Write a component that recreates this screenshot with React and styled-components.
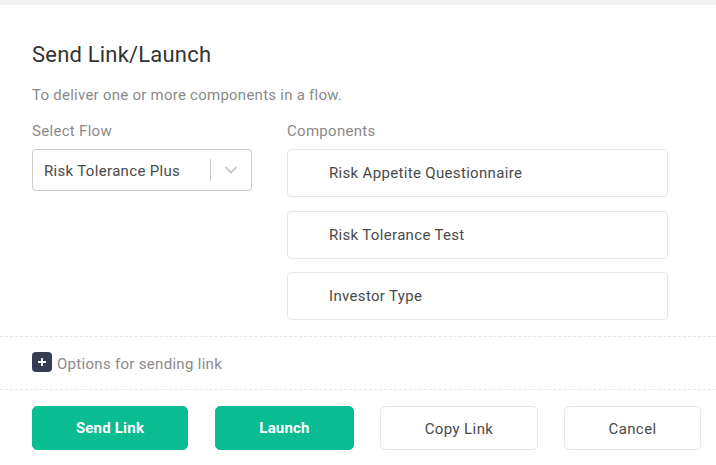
import React from "react";
import styled, { createGlobalStyle } from "styled-components";

const Global = createGlobalStyle`
  html, body { margin: 0; padding: 0; background: #fff; }
  body { font-family: Roboto, "Liberation Sans", sans-serif; }
`;

const Modal = styled.div`
  width: 716px;
  height: 465px;
  overflow: hidden;
  box-sizing: border-box;
  background: #fff;
  border-top: 5px solid #f2f2f2;
  display: flex;
  flex-direction: column;
`;

const Body = styled.div`
  padding: 33px 48px 0 32px;
  height: 331px;
  box-sizing: border-box;
`;

const Title = styled.h2`
  margin: 0;
  font-size: 22px;
  line-height: 34px;
  font-weight: 400;
  letter-spacing: 0.2px;
  color: #333;
`;

const Subtitle = styled.p`
  margin: 13px 0 0;
  font-size: 15px;
  line-height: 20px;
  letter-spacing: 0.25px;
  color: #8a8a8a;
`;

const Columns = styled.div`
  display: flex;
  gap: 35px;
  margin-top: 16px;
`;

const LeftColumn = styled.div`
  width: 220px;
`;

const RightColumn = styled.div`
  width: 381px;
`;

const FieldLabel = styled.div`
  font-size: 15px;
  line-height: 20px;
  letter-spacing: 0.3px;
  color: #8a8a8a;
  margin-bottom: 8px;
`;

const Select = styled.div`
  height: 42px;
  box-sizing: border-box;
  border: 1px solid #ccc;
  border-radius: 4px;
  display: flex;
  align-items: center;
  padding-left: 11px;
`;

const SelectValue = styled.span`
  flex: 1;
  padding-top: 2px;
  font-size: 15px;
  letter-spacing: 0.33px;
  color: #4a4a4a;
`;

const Separator = styled.span`
  width: 1px;
  height: 22px;
  background: #ccc;
`;

const Chevron = styled.svg`
  width: 14px;
  height: 10px;
  margin: 0 13px;
  fill: none;
  stroke: #ccc;
  stroke-width: 2;
`;

const ComponentList = styled.div`
  display: flex;
  flex-direction: column;
  gap: 13.5px;
`;

const ComponentRow = styled.div`
  height: 48px;
  box-sizing: border-box;
  border: 1px solid #e8e8e8;
  border-radius: 4px;
  display: flex;
  align-items: center;
  padding-left: 41px;
  font-size: 15px;
  letter-spacing: 0.33px;
  color: #4a4a4a;
`;

const OptionsRow = styled.div`
  height: 54px;
  box-sizing: border-box;
  border-top: 1px dashed #e8e8e8;
  border-bottom: 1px dashed #e8e8e8;
  display: flex;
  align-items: center;
  padding-left: 32px;
  gap: 5px;
  font-size: 15px;
  letter-spacing: 0.3px;
  color: #8a8a8a;
`;

const PlusBadge = styled.span`
  width: 20px;
  height: 20px;
  margin-bottom: 2px;
  border-radius: 4px;
  background: #343d52;
  display: flex;
  align-items: center;
  justify-content: center;
`;

const OptionsLabel = styled.span`
  padding-top: 2px;
`;

const Footer = styled.div`
  display: flex;
  padding: 16px 0 0 32px;
`;

const Button = styled.button`
  width: ${(p) => p.$w}px;
  height: 44px;
  margin-right: ${(p) => p.$gap || 0}px;
  box-sizing: border-box;
  border-radius: 5px;
  font-family: inherit;
  font-size: 15px;
  letter-spacing: ${(p) => (p.$primary ? "0.2px" : "0.4px")};
  padding: ${(p) => (p.$primary ? "0" : "2px 0 0")};
  font-weight: ${(p) => (p.$primary ? 700 : 400)};
  color: ${(p) => (p.$primary ? "#fff" : "#4a4a4a")};
  background: ${(p) => (p.$primary ? "#0bbb92" : "#fff")};
  border: 1px solid ${(p) => (p.$primary ? "#0bbb92" : "#e8e8e8")};
`;

export default function App() {
  return (
    <>
      <Global />
      <Modal>
        <Body>
          <Title>Send Link/Launch</Title>
          <Subtitle>To deliver one or more components in a flow.</Subtitle>
          <Columns>
            <LeftColumn>
              <FieldLabel>Select Flow</FieldLabel>
              <Select>
                <SelectValue>Risk Tolerance Plus</SelectValue>
                <Separator />
                <Chevron viewBox="0 0 14 10">
                  <path d="M1.5 2 L7 7.5 L12.5 2" />
                </Chevron>
              </Select>
            </LeftColumn>
            <RightColumn>
              <FieldLabel>Components</FieldLabel>
              <ComponentList>
                <ComponentRow>Risk Appetite Questionnaire</ComponentRow>
                <ComponentRow>Risk Tolerance Test</ComponentRow>
                <ComponentRow>Investor Type</ComponentRow>
              </ComponentList>
            </RightColumn>
          </Columns>
        </Body>
        <OptionsRow>
          <PlusBadge>
            <svg width="10" height="10" viewBox="0 0 10 10">
              <path d="M5 1v8M1 5h8" stroke="#fff" strokeWidth="1.8" />
            </svg>
          </PlusBadge>
          <OptionsLabel>Options for sending link</OptionsLabel>
        </OptionsRow>
        <Footer>
          <Button $primary $w={156} $gap={27}>Send Link</Button>
          <Button $primary $w={139} $gap={26}>Launch</Button>
          <Button $w={158} $gap={26}>Copy Link</Button>
          <Button $w={137}>Cancel</Button>
        </Footer>
      </Modal>
    </>
  );
}
